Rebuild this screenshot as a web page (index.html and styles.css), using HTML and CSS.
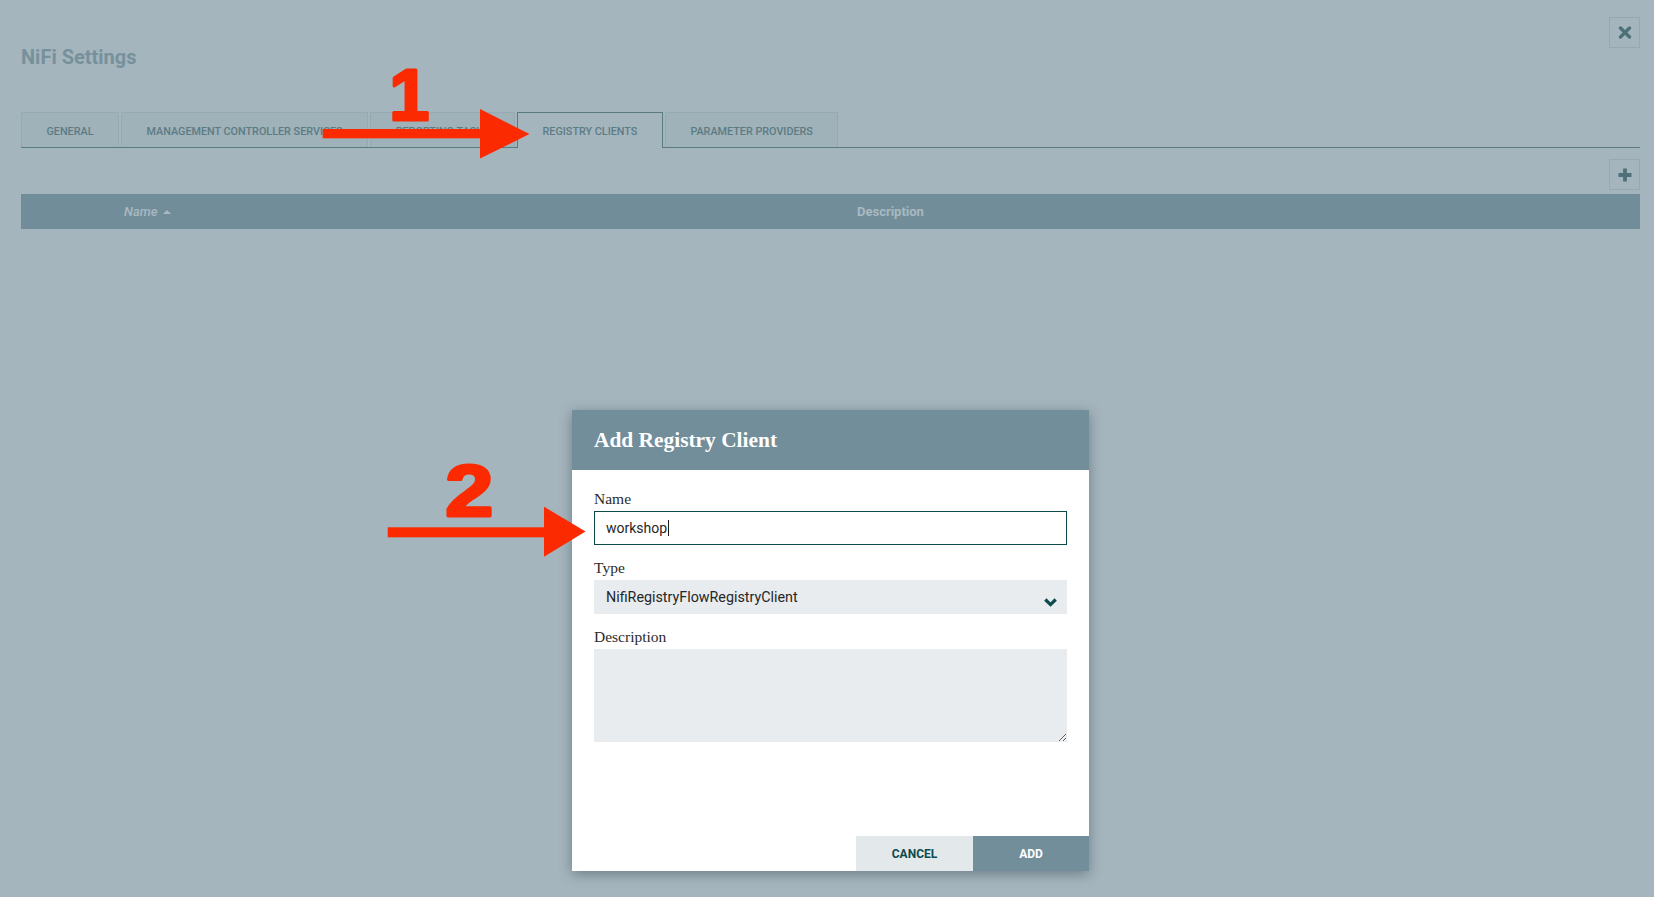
FILE: index.html
```html
<!DOCTYPE html>
<html lang="en">
<head>
<meta charset="utf-8">
<title>NiFi Settings</title>
<link rel="stylesheet" href="styles.css">
</head>
<body>
<div class="settings">
  <div class="top">
    <h1 class="title">NiFi Settings</h1>
    <div class="icon-btn">
      <svg width="14" height="13" viewBox="0 0 14 13"><path d="M2.5 2 L11.5 11 M11.5 2 L2.5 11" stroke="#4e7078" stroke-width="3.4" stroke-linecap="round"/></svg>
    </div>
  </div>
  <div class="tabs">
    <div class="tab">General</div>
    <div class="tab">Management Controller Services</div>
    <div class="tab">Reporting Tasks</div>
    <div class="tab active">Registry Clients</div>
    <div class="tab">Parameter Providers</div>
  </div>
  <div class="toolbar">
    <div class="icon-btn">
      <svg width="14" height="14" viewBox="0 0 14 14"><path d="M7 0.5 V13.5 M0.5 7 H13.5" stroke="#4e7078" stroke-width="3.8"/></svg>
    </div>
  </div>
  <div class="grid-header">
    <div class="col-name">Name <span class="sort-asc"></span></div>
    <div class="col-desc">Description</div>
  </div>
</div>

<div class="dialog">
  <div class="dialog-header">
    <h2 class="dialog-title">Add Registry Client</h2>
  </div>
  <div class="dialog-body">
    <div class="field">
      <div class="label">Name</div>
      <div class="input">workshop<span class="caret"></span></div>
    </div>
    <div class="field">
      <div class="label">Type</div>
      <div class="select">
        <span>NifiRegistryFlowRegistryClient</span>
        <svg class="chevron" width="13" height="9" viewBox="0 0 13 9"><path d="M1.3 1.5 L6.5 6.6 L11.7 1.5" fill="none" stroke="#0d4a4b" stroke-width="3.2"/></svg>
      </div>
    </div>
    <div class="field">
      <div class="label">Description</div>
      <textarea class="textarea"></textarea>
    </div>
  </div>
  <div class="dialog-footer">
    <div class="btn cancel">Cancel</div>
    <div class="btn add">Add</div>
  </div>
</div>

<svg class="annotations" width="1654" height="897" viewBox="0 0 1654 897">
  <g fill="#fb2a00">
    <rect x="322.7" y="129" width="160" height="9.3"/>
    <polygon points="480,109 529.5,134 480,158.5"/>
    <text class="digit" x="409.3" y="120">1</text>
    <rect x="387.7" y="527.3" width="158" height="10"/>
    <polygon points="544,506.7 585.5,531.5 544,556.7"/>
    <text class="digit" x="469.3" y="515.8" transform="translate(469.3 0) scale(1.2 1) translate(-469.3 0)">2</text>
  </g>
</svg>
</body>
</html>
```

FILE: styles.css
```css
html, body {
  margin: 0;
  padding: 0;
}

body {
  width: 1654px;
  height: 897px;
  overflow: hidden;
  position: relative;
  background: #a5b5bd;
  font-family: Roboto, "Noto Sans", "Liberation Sans", sans-serif;
}

.settings {
  padding: 17px 14px 0 21px;
}

.top {
  display: flex;
  justify-content: space-between;
  align-items: flex-start;
  height: 95px;
}

.title {
  margin: 28px 0 0;
  font-size: 20px;
  line-height: 24px;
  font-weight: 700;
  color: #76919c;
}

.icon-btn {
  width: 31px;
  height: 31px;
  box-sizing: border-box;
  border: 1px solid #94a9b2;
  display: flex;
  align-items: center;
  justify-content: center;
}

.tabs {
  display: flex;
  gap: 2px;
  border-bottom: 1px solid #587a81;
}

.tab {
  height: 35px;
  box-sizing: border-box;
  padding: 2px 24.5px 0;
  display: flex;
  align-items: center;
  font-size: 10.8px;
  font-weight: 500;
  text-transform: uppercase;
  color: #5c7c84;
  background: #9fb1b9;
  border: 1px solid #95aab3;
  border-bottom: none;
}

.tab.active {
  background: #a5b5bd;
  border-color: #587a81;
  height: 36px;
  margin-bottom: -1px;
}

.toolbar {
  display: flex;
  justify-content: flex-end;
  margin-top: 11px;
}

.grid-header {
  margin-top: 4px;
  height: 35px;
  background: #718d9a;
  color: #a8b9c0;
  font-size: 13px;
  display: flex;
  align-items: center;
  padding-left: 103px;
}

.col-name {
  width: 733px;
  font-style: italic;
  font-weight: 500;
  display: flex;
  align-items: center;
  gap: 6px;
}

.sort-asc {
  width: 0;
  height: 0;
  border-left: 4px solid transparent;
  border-right: 4px solid transparent;
  border-bottom: 4px solid #a8b9c0;
}

.col-desc {
  font-weight: 700;
}

/* Dialog */
.dialog {
  position: absolute;
  left: 572px;
  top: 410px;
  width: 517px;
  height: 461px;
  background: #ffffff;
  box-shadow: 0 3px 12px rgba(40, 60, 70, 0.45);
  display: flex;
  flex-direction: column;
}

.dialog-header {
  height: 60px;
  flex: none;
  background: #728e9b;
  padding: 0 22px;
  display: flex;
  align-items: center;
}

.dialog-title {
  margin: 0;
  font-family: "Liberation Serif", "DejaVu Serif", serif;
  font-weight: 700;
  font-size: 21.4px;
  line-height: 24px;
  color: #ffffff;
}

.dialog-body {
  flex: 1;
  padding: 20px 22px 0;
}

.field + .field {
  margin-top: 14px;
}

.label {
  font-family: "Liberation Serif", "DejaVu Serif", serif;
  font-size: 15.5px;
  line-height: 18px;
  color: #2a2a2a;
  margin-bottom: 3px;
}

.input {
  height: 34px;
  box-sizing: border-box;
  border: 1px solid #0d4a4b;
  padding: 0 11px;
  display: flex;
  align-items: center;
  font-size: 14px;
  color: #262626;
}

.caret {
  display: inline-block;
  width: 1px;
  height: 16px;
  margin-left: 1px;
  background: #1a1a1a;
}

.select {
  height: 34px;
  box-sizing: border-box;
  background: #e8ecef;
  padding: 0 10px 0 12px;
  display: flex;
  align-items: center;
  justify-content: space-between;
  font-size: 14.3px;
  color: #262626;
}

.chevron {
  align-self: flex-end;
  margin-bottom: 7px;
}

.textarea {
  display: block;
  width: 100%;
  height: 93px;
  box-sizing: border-box;
  border: none;
  outline: none;
  background: #e8ecef;
  resize: vertical;
  margin: 0;
}

.dialog-footer {
  display: flex;
  justify-content: flex-end;
}

.btn {
  height: 35px;
  display: flex;
  align-items: center;
  justify-content: center;
  font-size: 12px;
  font-weight: 700;
  text-transform: uppercase;
}

.btn.cancel {
  width: 117px;
  background: #e3e8eb;
  color: #0d4a4b;
}

.btn.add {
  width: 116px;
  background: #728e9b;
  color: #ffffff;
}

/* Annotation overlay (red arrows drawn over the screenshot) */
.annotations {
  position: absolute;
  left: 0;
  top: 0;
  pointer-events: none;
}

.digit {
  font-family: "Liberation Sans", Arial, sans-serif;
  font-weight: 700;
  font-size: 72px;
  text-anchor: middle;
  stroke: #fb2a00;
  stroke-width: 3;
  stroke-linejoin: round;
}
```
